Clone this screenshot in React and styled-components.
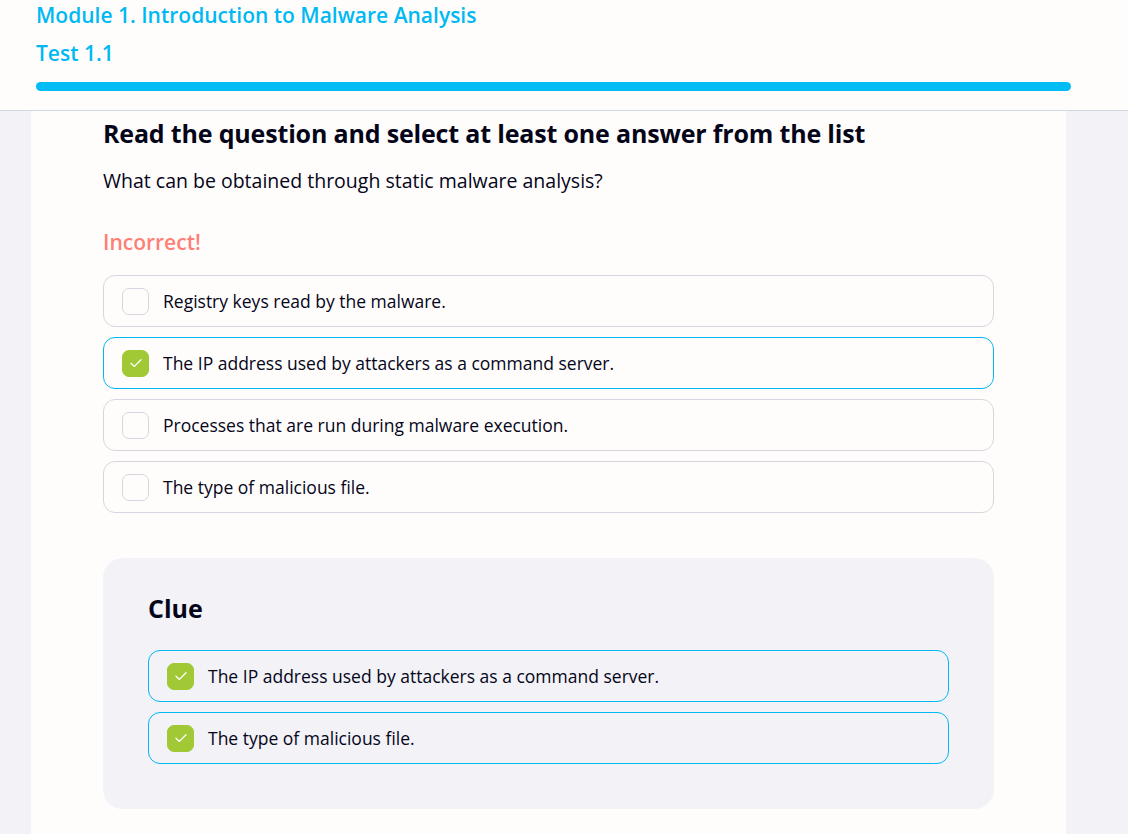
import React from 'react';
import styled, { createGlobalStyle } from 'styled-components';

const GlobalStyle = createGlobalStyle`
  html, body { margin: 0; padding: 0; }
  body {
    background: #f2f2f7;
    font-family: "Open Sans", "Noto Sans", sans-serif;
    color: #0b0b1e;
  }
  * { box-sizing: border-box; }
`;

const options = [
  { text: 'Registry keys read by the malware.', checked: false },
  { text: 'The IP address used by attackers as a command server.', checked: true },
  { text: 'Processes that are run during malware execution.', checked: false },
  { text: 'The type of malicious file.', checked: false },
];

const clues = [
  'The IP address used by attackers as a command server.',
  'The type of malicious file.',
];

const Check = () => (
  <svg width="16" height="16" viewBox="0 0 16 16" fill="none">
    <path d="M3 8.3 L6.4 11.4 L13 4.8" stroke="#fff" strokeWidth="1.3" strokeLinecap="round" strokeLinejoin="round" />
  </svg>
);

const App = () => (
  <>
    <GlobalStyle />
    <Page>
      <Header>
        <Title>Module 1. Introduction to Malware Analysis</Title>
        <Subtitle>Test 1.1</Subtitle>
        <Progress />
      </Header>
      <Card>
        <Heading>Read the question and select at least one answer from the list</Heading>
        <Question>What can be obtained through static malware analysis?</Question>
        <Status>Incorrect!</Status>
        <OptionList>
          {options.map((o) => (
            <Option key={o.text} $active={o.checked}>
              <Box $checked={o.checked}>{o.checked && <Check />}</Box>
              <span>{o.text}</span>
            </Option>
          ))}
        </OptionList>
        <ClueBox>
          <ClueTitle>Clue</ClueTitle>
          <ClueList>
            {clues.map((c) => (
              <Option key={c} $active>
                <Box $checked><Check /></Box>
                <span>{c}</span>
              </Option>
            ))}
          </ClueList>
        </ClueBox>
      </Card>
    </Page>
  </>
);

export default App;

const Page = styled.div`
  min-height: 834px;
  display: flex;
  flex-direction: column;
`;

const Header = styled.header`
  background: #fffdfc;
  border-bottom: 1px solid #d3d7de;
  padding: 0 57px 18px 36px;
  height: 111px;
  display: flex;
  flex-direction: column;
`;

const Title = styled.h1`
  margin: 0;
  padding-top: 1px;
  font-size: 21px;
  line-height: 28px;
  font-weight: 600;
  color: #00b9f2;
`;

const Subtitle = styled.h2`
  margin: 10px 0 0;
  font-size: 21px;
  line-height: 28px;
  font-weight: 600;
  color: #00b9f2;
`;

const Progress = styled.div`
  margin-top: 15px;
  height: 9px;
  border-radius: 5px;
  background: #00bcf5;
`;

const Card = styled.main`
  flex: 1;
  margin: 0 62px 0 31px;
  background: #fffdfc;
  padding: 6px 72px 26px;
`;

const Heading = styled.h3`
  margin: 0;
  font-size: 25px;
  line-height: 32px;
  font-weight: 700;
  color: #05051a;
  letter-spacing: -0.17px;
`;

const Question = styled.p`
  margin: 20px 0 0;
  font-size: 19.5px;
  line-height: 24px;
  color: #05051a;
`;

const Status = styled.p`
  margin: 36px 0 0;
  font-size: 21px;
  line-height: 26px;
  font-weight: 600;
  color: #fd7f76;
`;

const OptionList = styled.div`
  display: flex;
  flex-direction: column;
  gap: 10px;
  margin-top: 20px;
`;

const ClueList = styled(OptionList)`
  margin-top: 26px;
`;

const Option = styled.div`
  display: flex;
  align-items: center;
  gap: 14px;
  height: 52px;
  padding: 0 18px;
  border: 1px solid ${(p) => (p.$active ? '#00b9f2' : '#d6d6de')};
  border-radius: 12px;
  font-size: 17.5px;
  color: #05051a;
`;

const Box = styled.span`
  width: 27px;
  height: 27px;
  flex-shrink: 0;
  border-radius: 7px;
  display: flex;
  align-items: center;
  justify-content: center;
  background: ${(p) => (p.$checked ? '#a0c935' : '#fffdfc')};
  border: 1px solid ${(p) => (p.$checked ? '#a0c935' : '#d6d6de')};
`;

const ClueBox = styled.section`
  margin-top: 45px;
  background: #f2f2f7;
  border-radius: 20px;
  padding: 34px 45px 45px;
`;

const ClueTitle = styled.h3`
  margin: 0;
  font-size: 25px;
  line-height: 32px;
  font-weight: 700;
  color: #05051a;
`;
